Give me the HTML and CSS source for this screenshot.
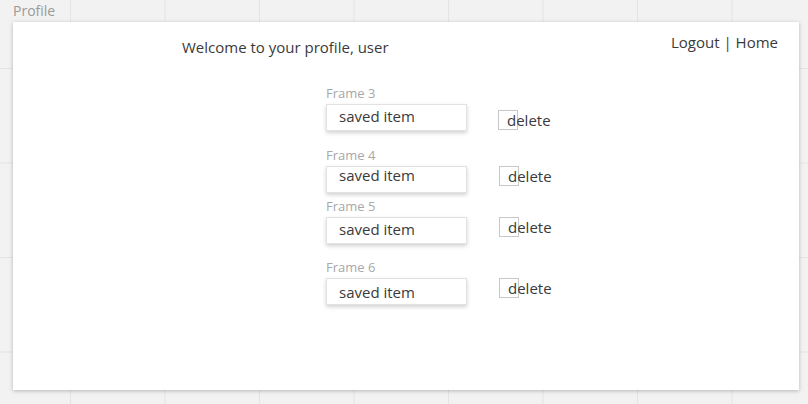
FILE: index.html
```html
<!DOCTYPE html>
<html>
<head>
<meta charset="utf-8">
<link rel="stylesheet" href="styles.css">
</head>
<body>
<div class="page-title">Profile</div>
<div class="card">
  <div class="header">
    <div class="welcome">Welcome to your profile, user</div>
    <div class="nav">Logout | Home</div>
  </div>
  <div class="items">
    <div class="item">
      <div class="label">Frame 3</div>
      <div class="row">
        <div class="field">saved item</div>
        <div class="delete delete-low"><span class="cb"></span><span class="dtext">delete</span></div>
      </div>
    </div>
    <div class="item gap-15">
      <div class="label">Frame 4</div>
      <div class="row">
        <div class="field field-high">saved item</div>
        <div class="delete"><span class="cb"></span><span class="dtext">delete</span></div>
      </div>
    </div>
    <div class="item gap-4">
      <div class="label">Frame 5</div>
      <div class="row">
        <div class="field">saved item</div>
        <div class="delete"><span class="cb"></span><span class="dtext">delete</span></div>
      </div>
    </div>
    <div class="item gap-14">
      <div class="label">Frame 6</div>
      <div class="row">
        <div class="field field-low">saved item</div>
        <div class="delete"><span class="cb"></span><span class="dtext">delete</span></div>
      </div>
    </div>
  </div>
</div>
</body>
</html>
```
FILE: styles.css
```css
html, body {
  margin: 0;
  padding: 0;
}
body {
  width: 808px;
  height: 404px;
  overflow: hidden;
  font-family: "Open Sans", "Noto Sans", sans-serif;
  color: #3a3a3a;
  background-color: #f2f2f2;
  background-image:
    linear-gradient(to right, #e4e4e4 1px, transparent 1px),
    linear-gradient(to bottom, #e4e4e4 1px, transparent 1px);
  background-size: 94.5px 94.5px;
  background-position: 70px 68px;
}
.page-title {
  font-size: 14px;
  line-height: 20px;
  color: #9a9a9a;
  padding: 1px 0 0 13px;
  height: 22px;
  box-sizing: border-box;
}
.card {
  margin-left: 13px;
  width: 786px;
  height: 368px;
  background: #fff;
  box-shadow: 0 1px 4px rgba(0,0,0,0.25);
  padding: 9px 21px 0 0;
  box-sizing: border-box;
}
.header {
  display: flex;
  justify-content: space-between;
  align-items: flex-start;
}
.welcome {
  margin-left: 169px;
  margin-top: 6px;
  font-size: 15px;
  line-height: 20px;
}
.nav {
  font-size: 15px;
  line-height: 20px;
  margin-top: 1px;
}
.items {
  margin-top: 27px;
  margin-left: 313px;
  display: flex;
  flex-direction: column;
}
.gap-15 { margin-top: 15px; }
.gap-4 { margin-top: 4px; }
.gap-14 { margin-top: 14px; }
.label {
  font-size: 13px;
  line-height: 19px;
  color: #a8a8a8;
  margin-bottom: 1px;
}
.row {
  display: flex;
  align-items: flex-start;
}
.field {
  width: 141px;
  height: 27px;
  box-sizing: border-box;
  border: 1px solid #e2e2e2;
  box-shadow: 0 2px 4px rgba(0,0,0,0.18);
  font-size: 15px;
  line-height: 23px;
  padding-left: 12px;
}
.field-high { line-height: 17px; }
.field-low { line-height: 26px; }
.delete {
  margin-left: 32px;
  display: flex;
  align-items: center;
  height: 20px;
}
.delete-low { margin-top: 6px; margin-left: 31px; }
.cb {
  width: 20px;
  height: 20px;
  box-sizing: border-box;
  border: 1px solid #c8c8c8;
  flex: none;
}
.dtext {
  margin-left: -11px;
  font-size: 15px;
  line-height: 20px;
}
```
